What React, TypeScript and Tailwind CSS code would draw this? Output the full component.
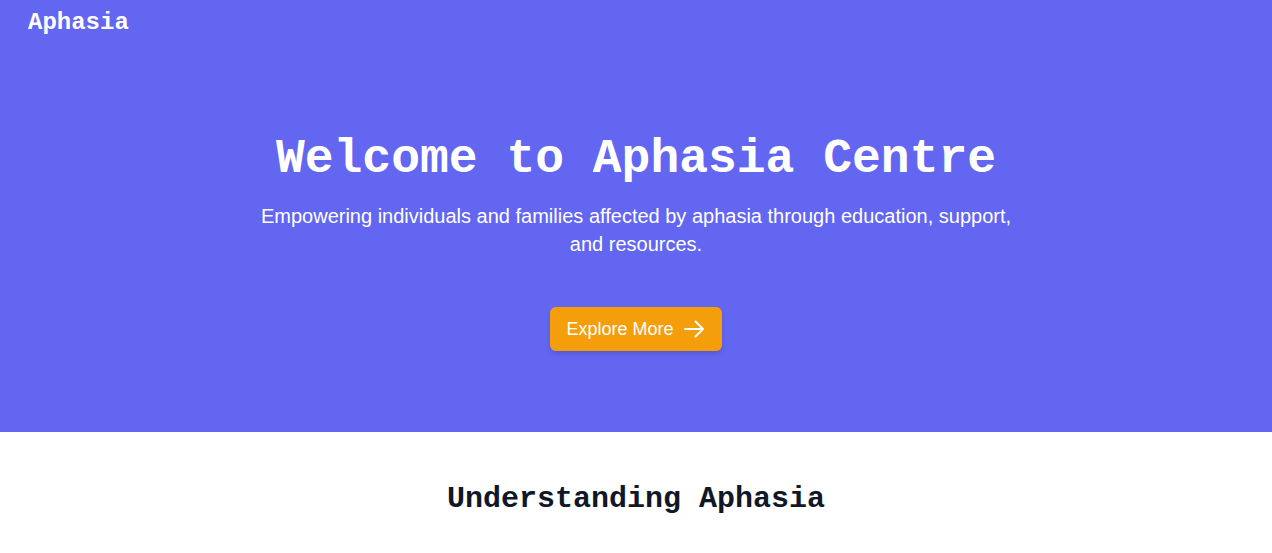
import React from 'react';

const mono = { fontFamily: '"Liberation Mono", "Courier New", monospace' };

function ArrowRight() {
  return (
    <svg viewBox="0 0 24 24" fill="none" stroke="currentColor" strokeWidth={2} strokeLinecap="round" strokeLinejoin="round" className="w-6 h-6">
      <path d="M13.5 4.5 21 12m0 0-7.5 7.5M21 12H3" />
    </svg>
  );
}

export default function App() {
  return (
    <div className="min-h-screen bg-white" style={{ fontFamily: '"Liberation Sans", Arial, sans-serif' }}>
      {/* Hero */}
      <header className="bg-[#6366f1] text-white h-[432px] flex flex-col">
        <nav className="px-7 pt-[7px]">
          <span className="text-2xl font-bold" style={mono}>Aphasia</span>
        </nav>
        <div className="flex flex-col items-center text-center pt-[96px]">
          <h1 className="text-5xl font-bold mb-[19px]" style={mono}>Welcome to Aphasia Centre</h1>
          <p className="text-xl max-w-3xl">
            Empowering individuals and families affected by aphasia through education, support, and resources.
          </p>
          <button className="mt-[49px] bg-[#f59e0b] rounded-md px-4 py-2 text-lg flex items-center gap-2 shadow-md">
            Explore More <ArrowRight />
          </button>
        </div>
      </header>

      {/* Understanding */}
      <section className="pt-[49px] flex justify-center">
        <h2 className="text-3xl font-bold text-gray-900" style={mono}>Understanding Aphasia</h2>
      </section>
    </div>
  );
}
